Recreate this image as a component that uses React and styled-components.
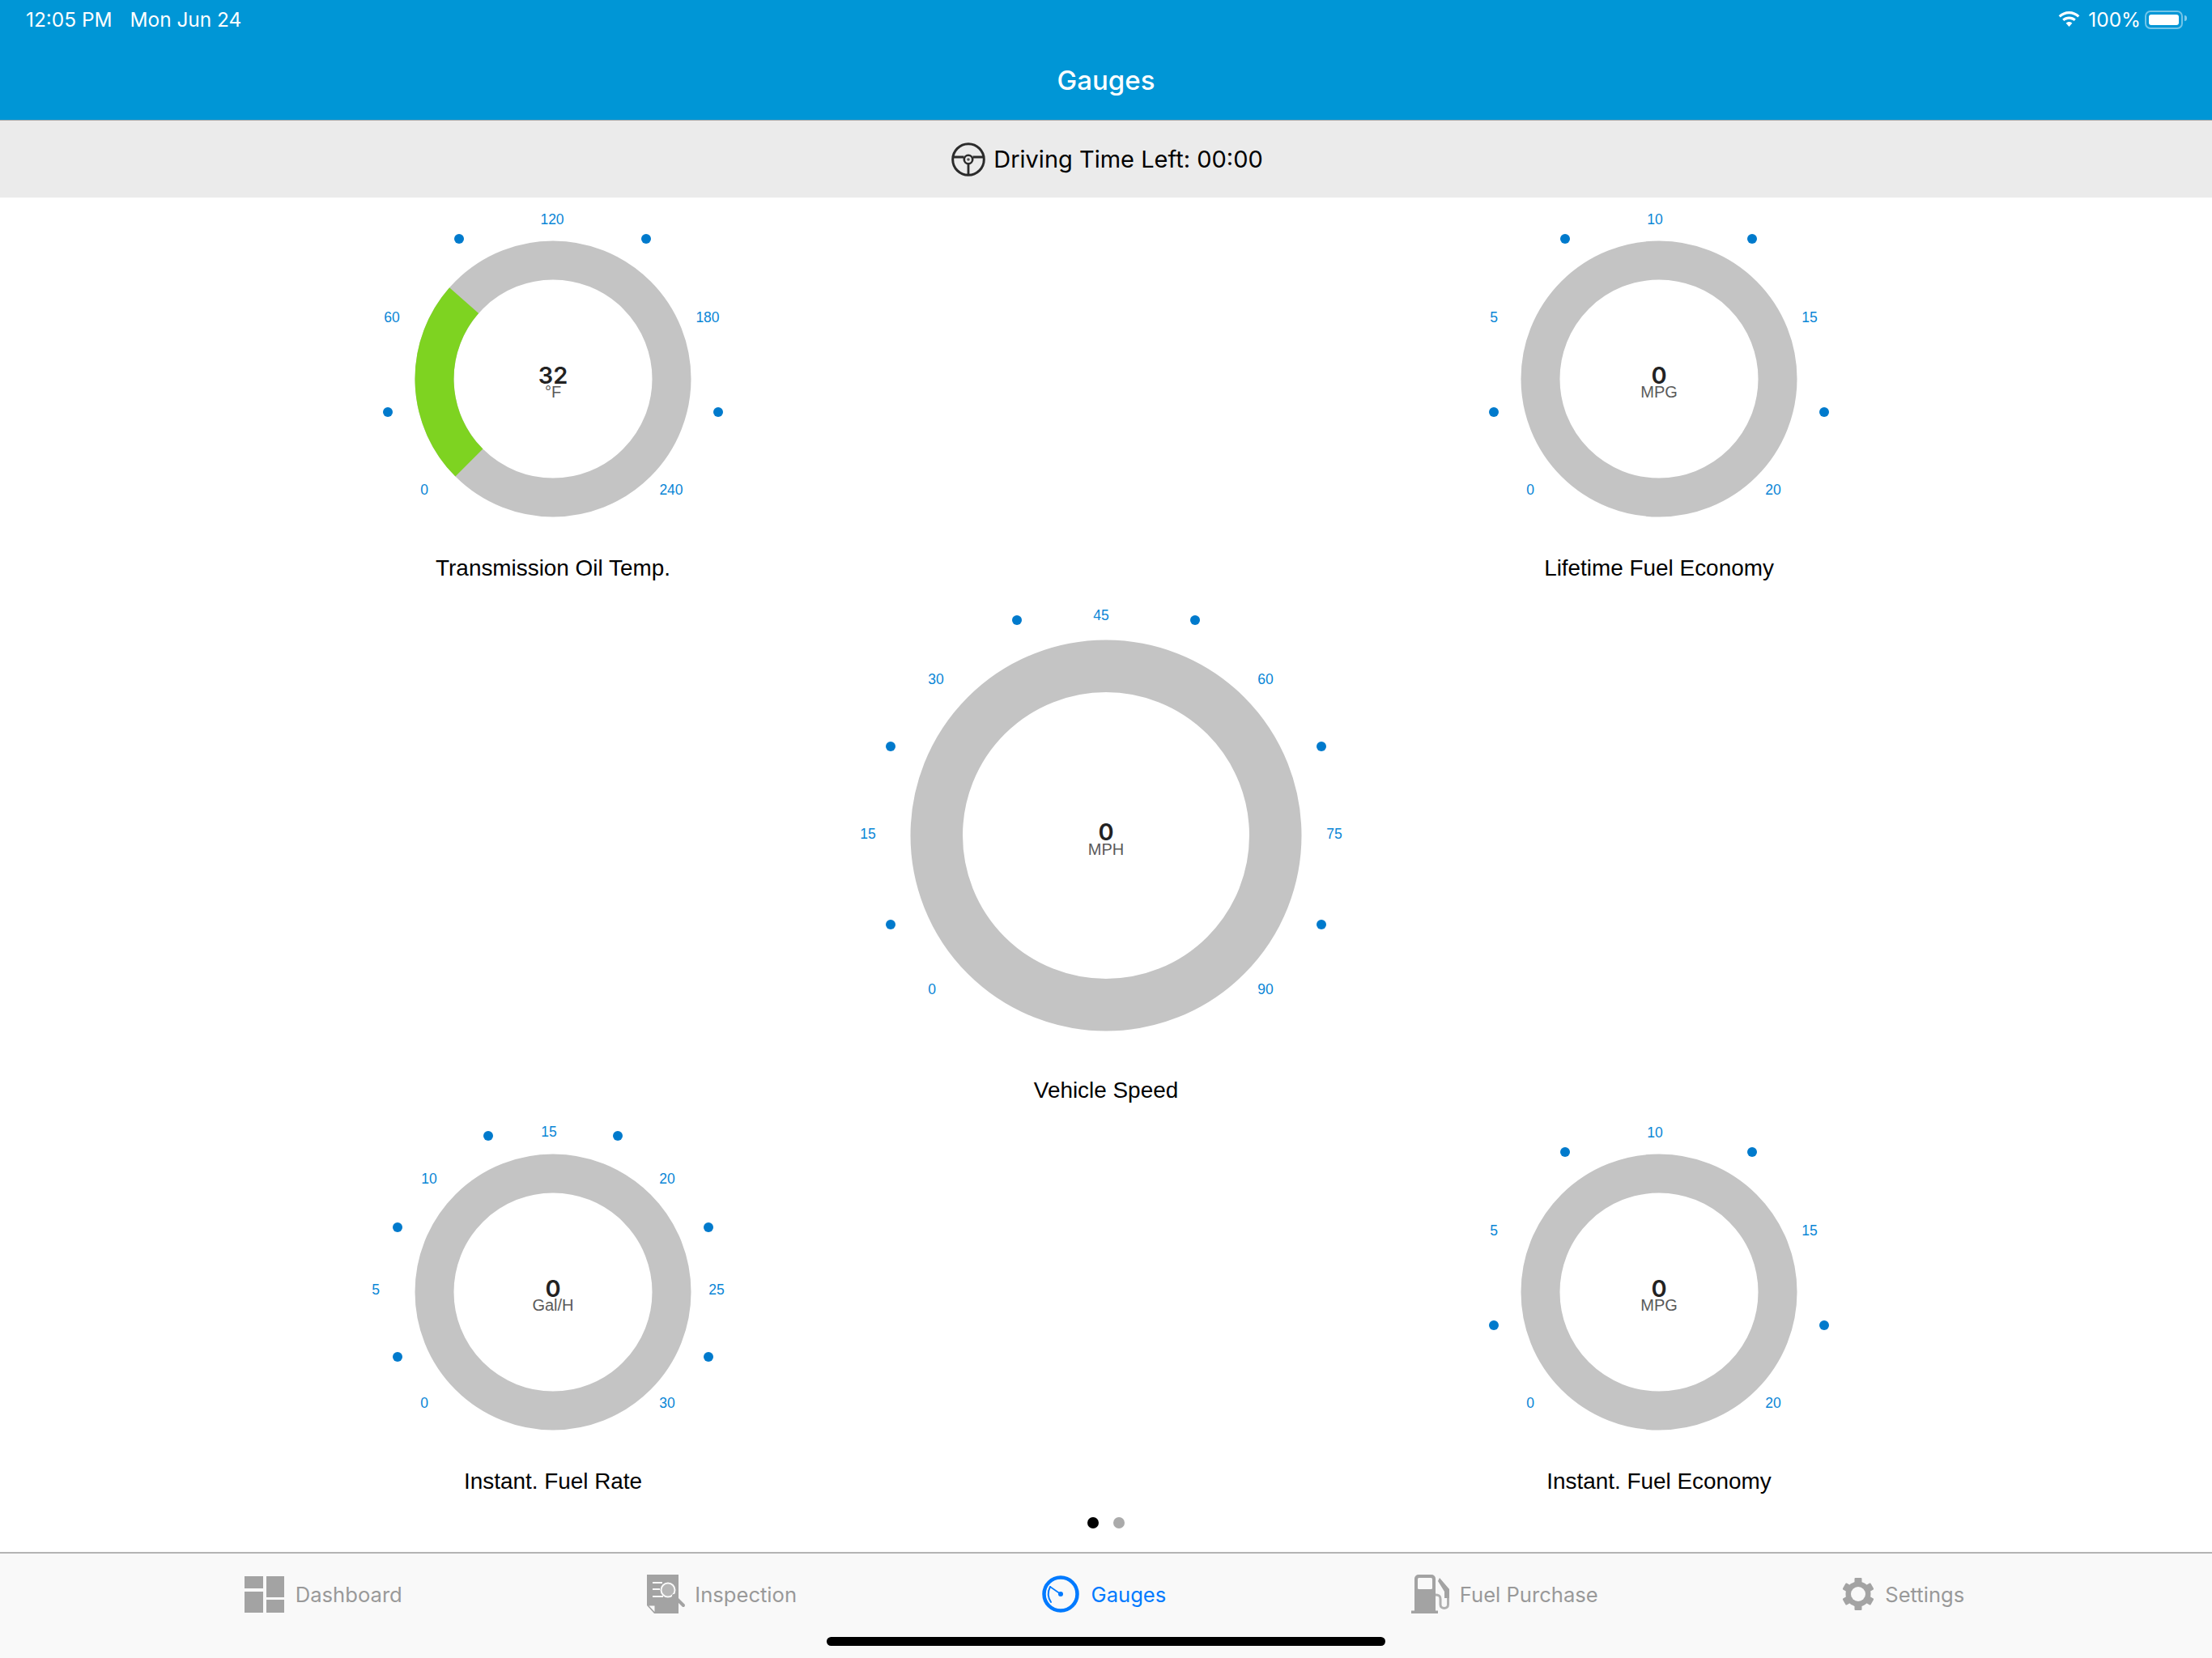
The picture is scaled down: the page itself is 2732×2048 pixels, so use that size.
import React from 'react';
import styled, { createGlobalStyle } from 'styled-components';

const GlobalStyle = createGlobalStyle`
  html, body { margin: 0; padding: 0; background: #fff; }
  body { font-family: "Liberation Sans", Arial, sans-serif; }
`;

const Screen = styled.div`
  width: 2732px;
  height: 2048px;
  display: flex;
  flex-direction: column;
  overflow: hidden;
  background: #fff;
`;

const Header = styled.header`
  height: 148px;
  flex: none;
  background: #0096d6;
  color: #fff;
  display: flex;
  flex-direction: column;
  font-family: Inter, sans-serif;
`;
const StatusBar = styled.div`
  height: 48px;
  display: flex;
  align-items: center;
  justify-content: space-between;
  padding: 0 30px 0 32px;
  font-size: 24.4px;
`;
const StatusGroup = styled.div`
  display: flex;
  align-items: center;
  gap: ${(p) => p.$gap || 12}px;
`;
const NavTitle = styled.div`
  flex: 1;
  display: flex;
  align-items: center;
  justify-content: center;
  padding-top: 2px;
  font-size: 33px;
  font-weight: 500;
`;
const Battery = styled.div`
  position: relative;
  box-sizing: border-box;
  width: 47px;
  height: 23px;
  padding: 3px;
  border: 2px solid rgba(255, 255, 255, 0.45);
  border-radius: 7px;
  margin: 0 6px 0 -5px;
  &::before {
    content: "";
    display: block;
    height: 100%;
    background: #fff;
    border-radius: 3px;
  }
  &::after {
    content: "";
    position: absolute;
    right: -7px;
    top: 4px;
    width: 3px;
    height: 7px;
    background: rgba(255, 255, 255, 0.5);
    border-radius: 0 3px 3px 0;
  }
`;

const DriveBar = styled.div`
  height: 96px;
  flex: none;
  box-sizing: border-box;
  border-top: 1px solid #a9a9a9;
  background: #ebebeb;
  display: flex;
  align-items: center;
  justify-content: center;
  gap: 10px;
  padding-left: 3px;
  font-family: Inter, sans-serif;
  font-size: 29px;
  color: #000;
`;

const Main = styled.main`
  flex: 1;
  display: flex;
  flex-direction: column;
`;
const GaugeRow = styled.div`
  display: flex;
  justify-content: center;
  padding-top: ${(p) => p.$top}px;
`;
const GaugeCell = styled.div`
  width: 1366px;
  display: flex;
  flex-direction: column;
  align-items: center;
`;
const GaugeTitle = styled.div`
  height: 44px;
  line-height: 47px;
  font-size: 27.9px;
  color: #000;
`;
const Dial = styled.svg`
  display: block;
  font-family: "Liberation Sans", Arial, sans-serif;
`;
const TickLabel = styled.text`
  font-size: 17.5px;
  fill: #0a86d6;
  text-anchor: middle;
  dominant-baseline: central;
`;
const ValueText = styled.text`
  font-family: Inter, sans-serif;
  font-size: 29px;
  font-weight: 600;
  fill: #222;
  text-anchor: middle;
  dominant-baseline: central;
`;
const UnitText = styled.text`
  font-size: 20px;
  fill: #5a5a5a;
  text-anchor: middle;
  dominant-baseline: central;
`;

const Pager = styled.div`
  margin-top: auto;
  padding-bottom: 29px;
  display: flex;
  justify-content: center;
  gap: 18px;
`;
const PagerDot = styled.span`
  width: 14px;
  height: 14px;
  border-radius: 50%;
  background: ${(p) => (p.$active ? '#000' : '#aaa')};
`;

const TabBar = styled.nav`
  position: relative;
  height: 131px;
  flex: none;
  box-sizing: border-box;
  border-top: 2px solid #b4b4b4;
  background: #f9f9f9;
  display: flex;
  justify-content: center;
  gap: 302.5px;
  padding: 26px 4px 0 0;
  font-family: Inter, sans-serif;
`;
const Tab = styled.div`
  display: flex;
  align-items: center;
  height: 48px;
  gap: ${(p) => p.$gap}px;
  font-size: 25.6px;
  color: ${(p) => (p.$active ? '#007aff' : '#999')};
`;
const HomeIndicator = styled.div`
  position: absolute;
  left: 1021px;
  bottom: 15px;
  width: 690px;
  height: 11px;
  border-radius: 6px;
  background: #000;
`;

const tempTicks = [
  { label: '0', x: -159, y: 137 },
  { label: '60', x: -199, y: -76 },
  { label: '120', x: -1, y: -197 },
  { label: '180', x: 191, y: -76 },
  { label: '240', x: 146, y: 137 },
];
const economyTicks = [
  { label: '0', x: -159, y: 137 },
  { label: '5', x: -204, y: -76 },
  { label: '10', x: -5, y: -197 },
  { label: '15', x: 186, y: -76 },
  { label: '20', x: 141, y: 137 },
];
const smallDots = [[-116, -173], [115, -173], [-204, 41], [204, 41]];

const speedTicks = [
  { label: '0', x: -215, y: 190 },
  { label: '15', x: -294, y: -2 },
  { label: '30', x: -210, y: -193 },
  { label: '45', x: -6, y: -272 },
  { label: '60', x: 197, y: -193 },
  { label: '75', x: 282, y: -2 },
  { label: '90', x: 197, y: 190 },
];
const speedDots = [[-110, -266], [110, -266], [-266, -110], [266, -110], [-266, 110], [266, 110]];

const rateTicks = [
  { label: '0', x: -159, y: 137 },
  { label: '5', x: -219, y: -3 },
  { label: '10', x: -153, y: -140 },
  { label: '15', x: -5, y: -198 },
  { label: '20', x: 141, y: -140 },
  { label: '25', x: 202, y: -3 },
  { label: '30', x: 141, y: 137 },
];
const rateDots = [[-80, -193], [80, -193], [-192, -80], [192, -80], [-192, 80], [192, 80]];

const polar = (r, deg) => {
  const a = (deg * Math.PI) / 180;
  return `${(r * Math.cos(a)).toFixed(2)} ${(r * Math.sin(a)).toFixed(2)}`;
};

const Gauge = ({ title, value, unit, ticks, dots, large, arc }) => {
  const w = large ? 680 : 520;
  const h = large ? 601 : 420;
  const cx = w / 2;
  const cy = large ? 310 : 210;
  const r = large ? 209.25 : 146.5;
  const sw = large ? 64.5 : 48;
  return (
    <GaugeCell>
      <Dial width={w} height={h} viewBox={`${-cx} ${-cy} ${w} ${h}`}>
        <circle r={r} fill="none" stroke="#c4c4c4" strokeWidth={sw} />
        {arc && (
          <path
            d={`M ${polar(r, arc[0])} A ${r} ${r} 0 0 1 ${polar(r, arc[1])}`}
            fill="none"
            stroke="#7ed321"
            strokeWidth={sw}
          />
        )}
        {dots.map(([x, y]) => (
          <circle key={`${x}${y}`} cx={x} cy={y} r="6" fill="#007acc" />
        ))}
        {ticks.map((t) => (
          <TickLabel key={t.label} x={t.x} y={t.y}>{t.label}</TickLabel>
        ))}
        <ValueText x="0" y="-5">{value}</ValueText>
        <UnitText x="0" y={large ? 17 : 16}>{unit}</UnitText>
      </Dial>
      <GaugeTitle>{title}</GaugeTitle>
    </GaugeCell>
  );
};

const WifiIcon = () => (
  <svg width="27" height="20" viewBox="0 0 27 20" fill="#fff">
    <path d="M13.5 0C8.5 0 4 2 .6 5.2l2.2 2.3C5.6 4.9 9.4 3.2 13.5 3.2s7.9 1.7 10.7 4.3l2.2-2.3C23 2 18.5 0 13.5 0z" />
    <path d="M13.5 6.6c-3.2 0-6.1 1.2-8.3 3.2l2.2 2.3c1.6-1.4 3.8-2.3 6.1-2.3s4.5.9 6.1 2.3l2.2-2.3c-2.2-2-5.1-3.2-8.3-3.2z" />
    <path d="M13.5 13c-1.5 0-2.9.6-3.9 1.5l3.9 4.5 3.9-4.5c-1-.9-2.4-1.5-3.9-1.5z" />
  </svg>
);

const WheelIcon = () => (
  <svg width="42" height="42" viewBox="0 0 42 42" fill="none" stroke="#2b2b2b">
    <circle cx="21" cy="21" r="19.3" strokeWidth="3" />
    <path d="M2 18h13.5M26.5 18h13.5M21 27v13" strokeWidth="2.8" />
    <circle cx="21" cy="21" r="5.2" strokeWidth="2.6" />
    <circle cx="21" cy="21" r="1.8" fill="#555" stroke="none" />
  </svg>
);

const DashboardIcon = () => (
  <svg width="49" height="45" viewBox="0 0 49 45" fill="#a3a3a3">
    <rect x="0" y="0" width="23" height="15" />
    <rect x="0" y="19" width="23" height="26" />
    <rect x="27" y="0" width="22" height="26" />
    <rect x="27" y="29" width="22" height="16" />
  </svg>
);

const InspectionIcon = () => (
  <svg width="48" height="48" viewBox="0 0 48 48">
    <path d="M0 0h39v48H9L0 38z" fill="#a3a3a3" />
    <path d="M2.5 38.5h7v7.5z" fill="#f9f9f9" />
    <path d="M7 10h12M7 18h9M7 27h13" stroke="#f9f9f9" strokeWidth="2" />
    <circle cx="26" cy="19" r="8.5" fill="#b5b5b5" stroke="#f9f9f9" strokeWidth="2" />
    <path d="M33 26L45 38" stroke="#a3a3a3" strokeWidth="4" strokeLinecap="round" />
  </svg>
);

const GaugesIcon = () => (
  <svg width="46" height="46" viewBox="0 0 46 46" fill="none" stroke="#007aff">
    <circle cx="23" cy="23" r="20.5" strokeWidth="4.5" />
    <path d="M10 14C7 20 7 27 11 33" strokeWidth="2" strokeLinecap="round" />
    <path d="M10 14L23 23" strokeWidth="1.6" />
    <circle cx="23" cy="23" r="3" fill="#007aff" stroke="none" />
  </svg>
);

const FuelIcon = () => (
  <svg width="49" height="48" viewBox="0 0 49 48">
    <path d="M4 5a5 5 0 0 1 5-5h16a5 5 0 0 1 5 5v39.5h3V48H0v-3.5h4z" fill="#a3a3a3" />
    <rect x="8" y="4" width="18" height="14" rx="1.5" fill="#f9f9f9" />
    <path d="M30 25c4 0 6 1 6 5v7c0 6 9.500 6 9.500 0V26" fill="none" stroke="#b0b0b0" strokeWidth="3" />
    <path d="M35 4l12 14v11h-6v-8l-8-13z" fill="#a3a3a3" />
  </svg>
);

const SettingsIcon = () => (
  <svg width="38" height="40" viewBox="0 0 38 40">
    <g fill="#a3a3a3">
      <circle cx="19" cy="20" r="15.5" />
      {[0, 60, 120, 180, 240, 300].map((a) => (
        <rect key={a} x="14.500" y="0" width="9" height="7" rx="1" transform={`rotate(${a} 19 20)`} />
      ))}
    </g>
    <circle cx="19" cy="20" r="9" fill="#f9f9f9" />
  </svg>
);

const tabs = [
  { label: 'Dashboard', Icon: DashboardIcon, gap: 14 },
  { label: 'Inspection', Icon: InspectionIcon, gap: 11 },
  { label: 'Gauges', Icon: GaugesIcon, gap: 15, active: true },
  { label: 'Fuel Purchase', Icon: FuelIcon, gap: 11 },
  { label: 'Settings', Icon: SettingsIcon, gap: 14 },
];

export default function App() {
  return (
    <Screen>
      <GlobalStyle />
      <Header>
        <StatusBar>
          <StatusGroup $gap={22}>
            <span>12:05 PM</span>
            <span>Mon Jun 24</span>
          </StatusGroup>
          <StatusGroup $gap={10}>
            <WifiIcon />
            <span>100%</span>
            <Battery />
          </StatusGroup>
        </StatusBar>
        <NavTitle>Gauges</NavTitle>
      </Header>
      <DriveBar>
        <WheelIcon />
        <span>Driving Time Left: 00:00</span>
      </DriveBar>
      <Main>
        <GaugeRow $top={14}>
          <Gauge title="Transmission Oil Temp." value="32" unit="°F" ticks={tempTicks} dots={smallDots} arc={[135, 221.4]} />
          <Gauge title="Lifetime Fuel Economy" value="0" unit="MPG" ticks={economyTicks} dots={smallDots} />
        </GaugeRow>
        <GaugeRow $top={0}>
          <Gauge large title="Vehicle Speed" value="0" unit="MPH" ticks={speedTicks} dots={speedDots} />
        </GaugeRow>
        <GaugeRow $top={19}>
          <Gauge title="Instant. Fuel Rate" value="0" unit="Gal/H" ticks={rateTicks} dots={rateDots} />
          <Gauge title="Instant. Fuel Economy" value="0" unit="MPG" ticks={economyTicks} dots={smallDots} />
        </GaugeRow>
        <Pager>
          <PagerDot $active />
          <PagerDot />
        </Pager>
      </Main>
      <TabBar>
        {tabs.map(({ label, Icon, gap, active }) => (
          <Tab key={label} $gap={gap} $active={active}>
            <Icon />
            <span>{label}</span>
          </Tab>
        ))}
        <HomeIndicator />
      </TabBar>
    </Screen>
  );
}
